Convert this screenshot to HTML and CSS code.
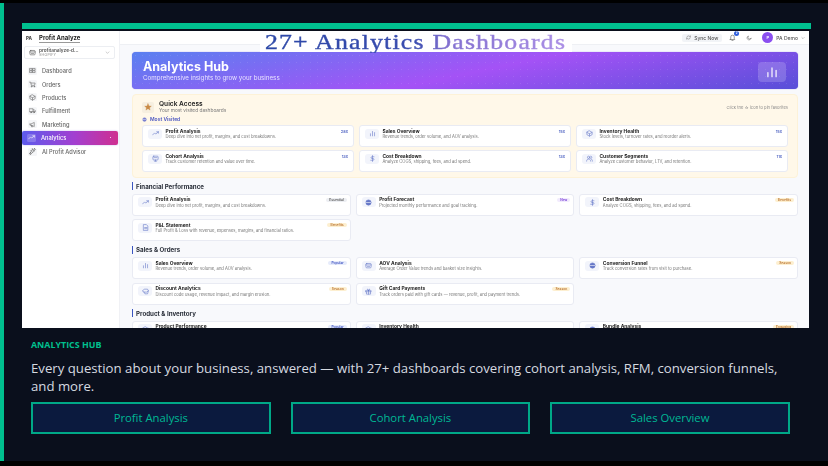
FILE: index.html
```html
<!DOCTYPE html>
<html lang="en">
  <head>
    <meta charset="UTF-8" />
    <meta name="viewport" content="width=device-width, initial-scale=1.0" />
    <title>Analytics Hub</title>
    <link rel="stylesheet" href="styles.css">
  </head>
  <body>
    <!-- Icon sprite -->
    <svg class="sprite" xmlns="http://www.w3.org/2000/svg">
      <symbol id="grid" viewBox="0 0 24 24"><rect x="3" y="5" width="8" height="6"/><rect x="13" y="5" width="8" height="6"/><rect x="3" y="13" width="8" height="6"/><rect x="13" y="13" width="8" height="6"/></symbol>
      <symbol id="cart" viewBox="0 0 24 24"><path d="M2 4h4l2 11h11l2-8H7"/><circle cx="9" cy="19" r="1.5"/><circle cx="18" cy="19" r="1.5"/></symbol>
      <symbol id="box" viewBox="0 0 24 24"><path d="M12 3l9 5v8l-9 5-9-5V8zM3 8l9 5 9-5M12 13v8"/></symbol>
      <symbol id="truck" viewBox="0 0 24 24"><path d="M2 6h12v10H2zM14 10h5l3 3v3h-8"/><circle cx="7" cy="18" r="2"/><circle cx="17" cy="18" r="2"/></symbol>
      <symbol id="horn" viewBox="0 0 24 24"><path d="M3 10v4h4l11 5V5L7 10zM7 14l2 6h3l-2-5"/></symbol>
      <symbol id="trend" viewBox="0 0 24 24"><path d="M2 17l7-7 4 4 9-8M16 6h6v5"/></symbol>
      <symbol id="bot" viewBox="0 0 24 24"><path d="M12 3l2 5 5 2-5 2-2 5-2-5-5-2 5-2zM5 15l1 3 3 1-3 1-1 3-1-3-3-1 3-1zM19 2l1 2 2 1-2 1-1 2-1-2-2-1 2-1z"/></symbol>
      <symbol id="bars" viewBox="0 0 24 24"><path d="M5 20v-7M12 20V5M19 20v-11"/></symbol>
      <symbol id="users" viewBox="0 0 24 24"><circle cx="9" cy="8" r="4"/><path d="M2 21c0-5 3-7 7-7s7 2 7 7M16 4a4 4 0 010 8M18 14c3 1 4 3 4 7"/></symbol>
      <symbol id="layers" viewBox="0 0 24 24"><rect x="3" y="4" width="18" height="13" rx="3"/><path d="M8 21h8M12 17v4M7 9h10"/></symbol>
      <symbol id="dollar" viewBox="0 0 24 24"><path d="M12 2v20M17 6H10a3 3 0 000 6h4a3 3 0 010 6H6"/></symbol>
      <symbol id="disc" viewBox="0 0 24 24"><circle cx="12" cy="12" r="9" fill="currentColor"/><path d="M3 12h18" stroke="#fff"/></symbol>
      <symbol id="doc" viewBox="0 0 24 24"><path d="M6 2h9l5 5v15H6zM9 12h8M9 16h8"/></symbol>
      <symbol id="tag" viewBox="0 0 24 24"><path d="M3 8l6-4h10l3 6-6 4H6zM7 14l3 6h9l3-10"/></symbol>
      <symbol id="bag" viewBox="0 0 24 24"><rect x="3" y="5" width="18" height="15" rx="3"/><path d="M3 10h18M8 15h8"/></symbol>
      <symbol id="gift" viewBox="0 0 24 24"><path d="M3 9h18v4H3zM5 13v8h14v-8M12 9v12M12 9C8 9 7 4 9 4s3 3 3 5 1-5 3-5 1 5-3 5"/></symbol>
      <symbol id="star" viewBox="0 0 24 24"><path fill="currentColor" d="M12 2l3 7 7 .6-5.4 4.6 1.7 7.1L12 17l-6.300 4.300 1.700-7.100L2 9.600 9 9z"/></symbol>
      <symbol id="bell" viewBox="0 0 24 24"><path d="M6 17V10a6 6 0 0112 0v7l2 2H4zM10 22h4"/></symbol>
      <symbol id="moon" viewBox="0 0 24 24"><path d="M20 14A8 8 0 1110 4a7 7 0 0010 10z"/></symbol>
      <symbol id="sync" viewBox="0 0 24 24"><path d="M4 11a8 8 0 0114-4l3 3V4M20 13a8 8 0 01-14 4l-3-3v6"/></symbol>
      <symbol id="chev" viewBox="0 0 24 24"><path d="M5 9l7 7 7-7"/></symbol>
    </svg>

    <div class="slide">
      <div class="accent"></div>

      <!-- App screenshot -->
      <div class="shot">
        <aside class="sidebar">
          <div class="brand"><span class="brand-logo">PA</span><span class="brand-name">Profit Analyze</span></div>
          <div class="store">
            <svg class="store-icon"><use href="#bag"/></svg>
            <div class="store-text"><b>profitanalyze-d...</b><span>SHOPIFY</span></div>
            <svg class="store-chev"><use href="#chev"/></svg>
          </div>
          <nav class="nav">
            <a class="nav-item"><i><svg><use href="#grid"/></svg></i>Dashboard</a>
            <a class="nav-item"><i><svg><use href="#cart"/></svg></i>Orders</a>
            <a class="nav-item"><i><svg><use href="#box"/></svg></i>Products</a>
            <a class="nav-item"><i><svg><use href="#truck"/></svg></i>Fulfillment</a>
            <a class="nav-item"><i><svg><use href="#horn"/></svg></i>Marketing</a>
            <a class="nav-item active"><i><svg><use href="#trend"/></svg></i>Analytics<em></em></a>
            <a class="nav-item"><i><svg><use href="#bot"/></svg></i>AI Profit Advisor</a>
          </nav>
        </aside>

        <div class="content">
          <header class="topbar">
            <button class="sync"><svg><use href="#sync"/></svg>Sync Now</button>
            <span class="bell"><svg><use href="#bell"/></svg><b>2</b></span>
            <svg class="moon"><use href="#moon"/></svg>
            <span class="avatar">P</span>
            <span class="user">PA Demo</span>
            <svg class="user-chev"><use href="#chev"/></svg>
          </header>

          <main class="main">
            <section class="hero">
              <div class="hero-text">
                <h2>Analytics Hub</h2>
                <p>Comprehensive insights to grow your business</p>
              </div>
              <div class="hero-icon"><svg><use href="#bars"/></svg></div>
            </section>

            <section class="quick">
              <div class="quick-head">
                <span class="quick-star"><svg><use href="#star"/></svg></span>
                <div class="quick-title"><h3>Quick Access</h3><p>Your most visited dashboards</p></div>
                <span class="quick-hint">Click the ☆ icon to pin favorites</span>
              </div>
              <div class="most"><svg><use href="#disc"/></svg>Most Visited</div>
              <div class="cards">
                <div class="card"><i><svg><use href="#trend"/></svg></i><div><h4>Profit Analysis</h4><p>Deep dive into net profit, margins, and cost breakdowns.</p></div><span class="count">28x</span></div>
                <div class="card"><i><svg><use href="#bars"/></svg></i><div><h4>Sales Overview</h4><p>Revenue trends, order volume, and AOV analysis.</p></div><span class="count">15x</span></div>
                <div class="card"><i><svg><use href="#box"/></svg></i><div><h4>Inventory Health</h4><p>Stock levels, turnover rates, and reorder alerts.</p></div><span class="count">15x</span></div>
                <div class="card"><i><svg><use href="#layers"/></svg></i><div><h4>Cohort Analysis</h4><p>Track customer retention and value over time.</p></div><span class="count">13x</span></div>
                <div class="card"><i><svg><use href="#dollar"/></svg></i><div><h4>Cost Breakdown</h4><p>Analyze COGS, shipping, fees, and ad spend.</p></div><span class="count">13x</span></div>
                <div class="card"><i><svg><use href="#users"/></svg></i><div><h4>Customer Segments</h4><p>Analyze customer behavior, LTV, and retention.</p></div><span class="count">11x</span></div>
              </div>
            </section>

            <h3 class="section">Financial Performance</h3>
            <div class="cards wide">
              <div class="card"><i><svg><use href="#trend"/></svg></i><div><h4>Profit Analysis</h4><p>Deep dive into net profit, margins, and cost breakdowns.</p></div><span class="badge gray">Essential</span></div>
              <div class="card"><i><svg><use href="#disc"/></svg></i><div><h4>Profit Forecast</h4><p>Projected monthly performance and goal tracking.</p></div><span class="badge violet">New</span></div>
              <div class="card"><i><svg><use href="#dollar"/></svg></i><div><h4>Cost Breakdown</h4><p>Analyze COGS, shipping, fees, and ad spend.</p></div><span class="badge amber">Benefits</span></div>
              <div class="card"><i><svg><use href="#doc"/></svg></i><div><h4>P&amp;L Statement</h4><p>Full Profit &amp; Loss with revenue, expenses, margins, and financial ratios.</p></div><span class="badge amber">Benefits</span></div>
            </div>

            <h3 class="section">Sales &amp; Orders</h3>
            <div class="cards wide">
              <div class="card"><i><svg><use href="#bars"/></svg></i><div><h4>Sales Overview</h4><p>Revenue trends, order volume, and AOV analysis.</p></div><span class="badge blue">Popular</span></div>
              <div class="card"><i><svg><use href="#bag"/></svg></i><div><h4>AOV Analysis</h4><p>Average Order Value trends and basket size insights.</p></div></div>
              <div class="card"><i><svg><use href="#disc"/></svg></i><div><h4>Conversion Funnel</h4><p>Track conversion rates from visit to purchase.</p></div><span class="badge amber">Season</span></div>
              <div class="card"><i><svg><use href="#tag"/></svg></i><div><h4>Discount Analytics</h4><p>Discount code usage, revenue impact, and margin erosion.</p></div><span class="badge amber">Season</span></div>
              <div class="card"><i><svg><use href="#gift"/></svg></i><div><h4>Gift Card Payments</h4><p>Track orders paid with gift cards — revenue, profit, and payment trends.</p></div><span class="badge amber">Season</span></div>
            </div>

            <h3 class="section">Product &amp; Inventory</h3>
            <div class="cards wide">
              <div class="card"><i><svg><use href="#box"/></svg></i><div><h4>Product Performance</h4></div><span class="badge blue">Popular</span></div>
              <div class="card"><i><svg><use href="#box"/></svg></i><div><h4>Inventory Health</h4></div></div>
              <div class="card"><i><svg><use href="#disc"/></svg></i><div><h4>Bundle Analysis</h4></div><span class="badge amber">Engaging</span></div>
            </div>
          </main>
        </div>

        <!-- Title pasted over the top of the screenshot -->
        <h1 class="shot-title"><span>27+ Analytics Dashboards</span></h1>
      </div>

      <div class="caption">
        <div class="kicker">ANALYTICS HUB</div>
        <p class="lead">Every question about your business, answered — with 27+ dashboards covering cohort analysis, RFM, conversion funnels, and more.</p>
        <div class="pills">
          <div class="pill">Profit Analysis</div>
          <div class="pill">Cohort Analysis</div>
          <div class="pill">Sales Overview</div>
        </div>
      </div>
    </div>
  </body>
</html>
```

FILE: styles.css
```css
* {
  margin: 0;
  padding: 0;
  box-sizing: border-box;
}

html,
body {
  width: 828px;
  height: 466px;
  background: #000;
  overflow: hidden;
  font-family: Inter, "Liberation Sans", sans-serif;
}

.sprite {
  display: none;
}

svg {
  fill: none;
  stroke: currentColor;
  stroke-width: 2;
  stroke-linecap: round;
  stroke-linejoin: round;
}

.slide {
  height: 458px;
  margin-top: 3px;
  padding-top: 20px;
  border-left: 4px solid #00c08f;
  background: #0a0f1c;
}

.accent {
  width: 789px;
  height: 6px;
  margin-left: 18px;
  background: #00c08f;
}

/* screenshot */
.shot {
  position: relative;
  display: flex;
  width: 787px;
  height: 297px;
  margin: 2px 0 0 18px;
  background: #f8f9fc;
  overflow: hidden;
  filter: blur(0.35px);
}

.shot-title {
  position: absolute;
  top: 0;
  left: 238px;
  width: 312px;
  height: 21px;
  background: #fff;
  font: 400 21.5px/22px "Liberation Serif", serif;
  text-align: center;
  white-space: nowrap;
}

.shot-title span {
  display: inline-block;
  letter-spacing: 1px;
  transform: scaleX(1.2);
  color: transparent;
  -webkit-text-stroke: 0.4px transparent;
  background: linear-gradient(90deg, #2a46a6 0%, #3a4db0 50%, #8270d0 60%, #ac90e6 100%);
  -webkit-background-clip: text;
  background-clip: text;
}

.sidebar {
  width: 98px;
  flex: none;
  background: #fff;
  border-right: 1px solid #f0f1f5;
}

.brand {
  display: flex;
  align-items: center;
  height: 14px;
  padding-left: 4px;
}

.brand-logo {
  width: 13px;
  font-size: 4.500px;
  font-weight: 800;
  color: #444;
}

.brand-name {
  font-size: 6px;
  font-weight: 700;
  color: #222;
  border-bottom: 1px solid #999;
  padding-bottom: 1px;
}

.store {
  display: flex;
  align-items: center;
  height: 13px;
  margin: 1px 4px 0 2px;
  padding: 0 4px;
  border: 1px solid #eceef2;
  border-radius: 2px;
}

.store-icon {
  width: 7px;
  height: 7px;
  margin-right: 3px;
  color: #555;
}

.store-text {
  flex: 1;
  line-height: 5px;
  color: #555;
}

.store-text b {
  display: block;
  font-size: 4.700px;
  font-weight: 600;
}

.store-text span {
  display: block;
  font-size: 3.500px;
  letter-spacing: 0.3px;
  color: #888;
}

.store-chev {
  width: 5px;
  height: 5px;
  color: #888;
}

.nav {
  display: flex;
  flex-direction: column;
  margin-top: 5px;
}

.nav-item {
  display: flex;
  align-items: center;
  gap: 5px;
  height: 13.400px;
  padding-left: 6px;
  font-size: 5.700px;
  font-weight: 500;
  color: #666;
}

.nav-item i {
  display: flex;
  align-items: center;
  justify-content: center;
  width: 9px;
  height: 8px;
  background: #f5f6f8;
  border-radius: 1.500px;
}

.nav-item svg {
  width: 7px;
  height: 7px;
}

.nav-item.active {
  width: 96px;
  height: 14px;
  padding-left: 5px;
  border-radius: 2px;
  color: #fff;
  background: linear-gradient(90deg, #5d5bec, #a33fd0 55%, #cf2f90);
  box-shadow: 0 0 2px #b9b4f0;
}

.nav-item.active i {
  background: rgba(255, 255, 255, 0.2);
}

.nav-item.active em {
  width: 1px;
  height: 1px;
  margin-left: auto;
  margin-right: 7px;
  background: #fff;
  border-radius: 50%;
}

.content {
  flex: 1;
  min-width: 0;
}

.topbar {
  display: flex;
  align-items: center;
  justify-content: flex-end;
  height: 14px;
  padding-right: 4px;
  background: #fff;
  border-bottom: 1px solid #eef0f4;
  color: #555;
}

.sync {
  display: flex;
  align-items: center;
  justify-content: center;
  gap: 3px;
  width: 40px;
  height: 8px;
  border: 0;
  border-radius: 2px;
  background: #f2f4f7;
  color: #555;
  font: 500 5px Inter, sans-serif;
}

.sync svg {
  width: 5px;
  height: 5px;
}

.bell {
  position: relative;
  margin-left: 7px;
  height: 7px;
}

.bell svg {
  display: block;
  width: 7px;
  height: 7px;
}

.bell b {
  position: absolute;
  top: -3px;
  right: -3px;
  width: 5px;
  height: 5px;
  border-radius: 50%;
  background: #2f5fdc;
  color: #fff;
  font-size: 3px;
  line-height: 5px;
  text-align: center;
}

.moon {
  width: 6px;
  height: 6px;
  margin-left: 10px;
}

.avatar {
  width: 11px;
  height: 11px;
  margin-left: 10px;
  border-radius: 50%;
  background: #8b4ff0;
  color: #fff;
  font-size: 4px;
  font-weight: 600;
  line-height: 11px;
  text-align: center;
}

.user {
  margin-left: 3px;
  font-size: 5px;
  font-weight: 500;
}

.user-chev {
  width: 4px;
  height: 4px;
  margin-left: 3px;
}

.main {
  padding: 7px 11px 0 12px;
  height: 283px;
  overflow: hidden;
  background-color: #f8f9fc;
  background-image: radial-gradient(#e9ebf3 0.5px, transparent 0.6px);
  background-size: 6px 6px;
}

.hero {
  display: flex;
  align-items: center;
  justify-content: space-between;
  height: 37px;
  padding: 0 12px 0 11px;
  border-radius: 4px;
  color: #fff;
  background-color: #7d5cf0;
  background-image:
    radial-gradient(rgba(255, 255, 255, 0.1) 0.5px, transparent 0.7px),
    linear-gradient(168deg, #5a80f0 0%, #a452f6 52%, #584fd8 100%);
  background-size: 7px 7px, 100% 100%;
  box-shadow: 0 0 1px #7c6ae0;
}

.hero-text {
  margin-bottom: 1px;
}

.hero h2 {
  font-size: 12.500px;
  font-weight: 700;
  line-height: 15px;
}

.hero p {
  font-size: 6.200px;
  line-height: 8px;
  color: #e8e4ff;
}

.hero-icon {
  position: relative;
  display: flex;
  align-items: center;
  justify-content: center;
  width: 28px;
  height: 20px;
  margin-top: 2px;
  border-radius: 4px;
  background: rgba(255, 255, 255, 0.18);
}

.hero-icon::before {
  content: "";
  position: absolute;
  top: -2px;
  left: 0;
  right: 0;
  height: 10px;
  border-radius: 14px 14px 0 0;
  background-image: radial-gradient(rgba(255, 255, 255, 0.7) 0.4px, transparent 0.6px);
  background-size: 2px 2px;
}

.hero-icon svg {
  width: 14px;
  height: 14px;
  color: #fff;
}

.quick {
  height: 84px;
  margin-top: 5px;
  padding: 6px 9px 0;
  border: 1px solid #fdf2d8;
  border-radius: 4px;
  background: #fff8e9;
}

.quick-head {
  display: flex;
  align-items: center;
  height: 12px;
}

.quick-star {
  display: flex;
  align-items: center;
  justify-content: center;
  width: 12px;
  height: 11px;
  margin-right: 5px;
  border-radius: 2px;
  background: #f6efe0;
  color: #c98a45;
}

.quick-star svg {
  width: 8px;
  height: 8px;
  stroke-width: 1;
}

.quick-title h3 {
  font-size: 6.600px;
  font-weight: 600;
  line-height: 6.500px;
  color: #222;
}

.quick-title p {
  font-size: 4.800px;
  line-height: 5.500px;
  color: #777;
}

.quick-hint {
  margin-left: auto;
  font-size: 4.100px;
  color: #888;
}

.most {
  display: flex;
  align-items: center;
  gap: 3px;
  height: 6px;
  margin: 3px 0;
  font-size: 5px;
  font-weight: 600;
  color: #4a55c0;
}

.most svg {
  width: 5px;
  height: 5px;
  color: #7a80d0;
}

.cards {
  display: grid;
  grid-template-columns: repeat(3, 1fr);
  grid-auto-rows: 22px;
  gap: 3px 5px;
}

.cards.wide {
  gap: 3.500px 5px;
}

.card {
  position: relative;
  display: flex;
  align-items: flex-start;
  padding: 2.700px 0 0 5px;
  border: 1px solid #e9ebf3;
  border-radius: 3px;
  background: #fff;
}

.card i {
  display: flex;
  align-items: center;
  justify-content: center;
  flex: none;
  width: 14px;
  height: 10px;
  margin-right: 3.500px;
  border-radius: 3px;
  background: #f2f4fb;
  color: #6678c8;
}

.card i svg {
  width: 7px;
  height: 7px;
}

.card h4 {
  font-size: 4.900px;
  font-weight: 700;
  line-height: 5.500px;
  color: #222;
}

.card p {
  font-size: 4.150px;
  line-height: 5px;
  color: #777;
  white-space: nowrap;
}

.count {
  position: absolute;
  top: 3px;
  right: 5px;
  font-size: 3.900px;
  font-weight: 600;
  color: #4a5fc0;
}

.badge {
  position: absolute;
  top: 3px;
  right: 3px;
  height: 4px;
  padding: 0 3px;
  border-radius: 2px;
  font-size: 3.300px;
  font-weight: 600;
  line-height: 4px;
}

.badge.gray {
  background: #eceef2;
  color: #555;
}

.badge.violet {
  background: #f1eafd;
  color: #7a3fd8;
}

.badge.blue {
  background: #e6ebfb;
  color: #3b50c0;
}

.badge.amber {
  background: #fdefd0;
  color: #b8702a;
}

.section {
  display: flex;
  align-items: center;
  height: 8px;
  margin: 4.500px 0 3.500px;
  padding-left: 3px;
  border-left: 1px solid #3a55c0;
  font-size: 6.200px;
  font-weight: 700;
  color: #2a2f3a;
}

.quick + .section {
  margin-top: 4px;
}

/* slide caption */
.caption {
  padding: 11px 38px 0 27px;
  font-family: "Open Sans", "Liberation Sans", sans-serif;
}

.kicker {
  font-size: 8.900px;
  font-weight: 700;
  line-height: 12px;
  color: #00c08f;
}

.lead {
  margin-top: 8px;
  font-size: 13.200px;
  line-height: 18px;
  color: #d6dae0;
}

.pills {
  display: grid;
  grid-template-columns: repeat(3, 239.600px);
  gap: 20px;
  margin-top: 7px;
}

.pill {
  height: 32px;
  border: 2px solid #00a887;
  background: #0b1a3e;
  color: #00b894;
  font-size: 11.300px;
  line-height: 28px;
  text-align: center;
}
```
